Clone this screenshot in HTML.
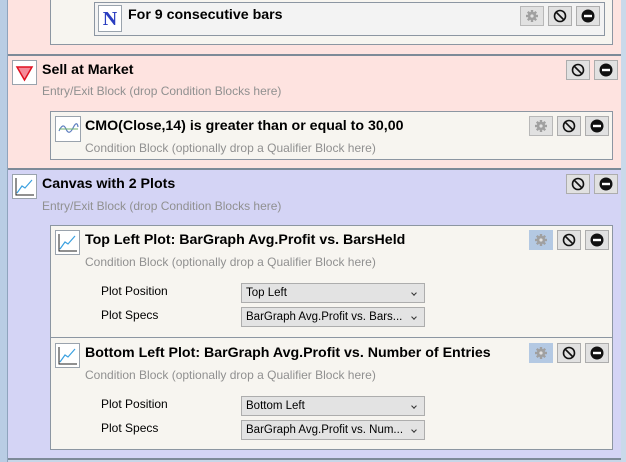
<!DOCTYPE html>
<html><head><style>
*{margin:0;padding:0;box-sizing:border-box}
body{width:626px;height:462px;overflow:hidden;background:#c7d6e8;font-family:"Liberation Sans",sans-serif;position:relative}
.a{position:absolute}
.sec{position:absolute;left:8px;width:613px;border-bottom:2px solid #7d8a98}
.t{position:absolute;font-weight:bold;font-size:14.2px;color:#000;white-space:nowrap}
.s{position:absolute;font-size:12px;color:#909090;white-space:nowrap}
.box{position:absolute;background:#f7f5f0;border:1px solid #8c96a2}
.ic{position:absolute;width:25px;height:25px;background:#fff;border:1px solid #9aa3ad}
.b{position:absolute;width:24px;height:20px;background:#e1e1e1;border:1px solid #adadad;display:flex;align-items:center;justify-content:center}
.b.g{border-color:#b8b8b8}
.b.h{background:#b4c9e3;border-color:#b4c9e3}
.l{position:absolute;font-size:12px;color:#000}
.dd{position:absolute;left:241px;width:184px;height:20px;background:#e3e3e3;border:1px solid #adadad;font-size:11.5px;padding:3px 0 0 4px;white-space:nowrap}
.dd:after{content:"";position:absolute;right:8px;top:7px;width:3px;height:3px;border-right:1px solid #333;border-bottom:1px solid #333;transform:rotate(45deg)}
</style></head><body>
<svg width="0" height="0" style="position:absolute"><defs>
<g id="gear"><circle cx="7" cy="7" r="4.2" fill="#a0a0a0"/><g stroke="#a0a0a0" stroke-width="2.4"><line x1="7" y1="1" x2="7" y2="13"/><line x1="1" y1="7" x2="13" y2="7"/><line x1="2.8" y1="2.8" x2="11.2" y2="11.2"/><line x1="11.2" y1="2.8" x2="2.8" y2="11.2"/></g><circle cx="7" cy="7" r="1.6" fill="#e1e1e1"/></g>
</defs></svg>
<div class="a" style="left:0;top:0;width:8px;height:462px;background:#b9cde4;border-right:1px solid #8fa4bd"></div>
<div class="a" style="left:621px;top:0;width:5px;height:462px;background:#c9d9ea"></div>

<div class="sec" style="top:0;height:56px;background:#fee3e0">
 <div class="box" style="left:42px;top:-1px;width:563px;height:46px"></div>
 <div class="a" style="left:86px;top:2px;width:511px;height:34px;background:#f3f3f3;border:1px solid #8c96a2"></div>
 <div class="ic" style="left:90px;top:5px;width:24px;height:27px;font:bold 20px 'Liberation Serif',serif;color:#2a3ec0;text-align:center;line-height:26px">N</div>
 <div class="t" style="left:120px;top:7px">For 9 consecutive bars</div>
</div>
<div class="b g" style="left:520px;top:6px"><svg width="14" height="14"><use href="#gear"/></svg></div>
<div class="b" style="left:548px;top:6px"><svg width="14" height="14"><circle cx="7" cy="7" r="5.5" fill="none" stroke="#111" stroke-width="1.6"/><line x1="3" y1="3" x2="11" y2="11" stroke="#111" stroke-width="1.6"/></svg></div>
<div class="b" style="left:576px;top:6px"><svg width="14" height="14"><circle cx="7" cy="7" r="6.5" fill="#111"/><rect x="3" y="5.8" width="8" height="2.4" fill="#fff"/></svg></div>

<div class="sec" style="top:56px;height:114px;background:#fee3e0">
 <div class="ic" style="left:4px;top:4px"><svg width="23" height="23"><polygon points="4,6 19,6 11.5,19" fill="#f58a98" stroke="#e01020" stroke-width="1.5"/></svg></div>
 <div class="t" style="left:34px;top:6px">Sell at Market</div>
 <div class="s" style="left:34px;top:28px">Entry/Exit Block (drop Condition Blocks here)</div>
 <div class="box" style="left:42px;top:55px;width:563px;height:49px">
  <div class="ic" style="left:4px;top:4px;width:26px;height:26px"><svg width="24" height="24"><path d="M3 14 Q7 5 10 12 T17 11 T22 10" fill="none" stroke="#6080c0" stroke-width="1.2"/><line x1="3" y1="12" x2="22" y2="12" stroke="#70b070" stroke-width="1"/></svg></div>
  <div class="t" style="left:34px;top:6px">CMO(Close,14) is greater than or equal to 30,00</div>
  <div class="s" style="left:34px;top:29px">Condition Block (optionally drop a Qualifier Block here)</div>
 </div>
</div>
<div class="b g" style="left:529px;top:116px"><svg width="14" height="14"><use href="#gear"/></svg></div>
<div class="b" style="left:557px;top:116px"><svg width="14" height="14"><circle cx="7" cy="7" r="5.5" fill="none" stroke="#111" stroke-width="1.6"/><line x1="3" y1="3" x2="11" y2="11" stroke="#111" stroke-width="1.6"/></svg></div>
<div class="b" style="left:585px;top:116px"><svg width="14" height="14"><circle cx="7" cy="7" r="6.5" fill="#111"/><rect x="3" y="5.8" width="8" height="2.4" fill="#fff"/></svg></div>
<div class="b" style="left:566px;top:60px"><svg width="14" height="14"><circle cx="7" cy="7" r="5.5" fill="none" stroke="#111" stroke-width="1.6"/><line x1="3" y1="3" x2="11" y2="11" stroke="#111" stroke-width="1.6"/></svg></div>
<div class="b" style="left:594px;top:60px"><svg width="14" height="14"><circle cx="7" cy="7" r="6.5" fill="#111"/><rect x="3" y="5.8" width="8" height="2.4" fill="#fff"/></svg></div>

<div class="sec" style="top:170px;height:290px;background:#d4d4f5">
 <div class="ic" style="left:4px;top:4px"><svg width="23" height="23"><path d="M3 3V20H21" fill="none" stroke="#222" stroke-width="1"/><path d="M4 18L9 11L12 13L19 5" fill="none" stroke="#3aa0e0" stroke-width="1.2"/></svg></div>
 <div class="t" style="left:34px;top:6px">Canvas with 2 Plots</div>
 <div class="s" style="left:34px;top:29px">Entry/Exit Block (drop Condition Blocks here)</div>
 <div class="box" style="left:42px;top:55px;width:563px;height:113px">
  <div class="ic" style="left:4px;top:4px"><svg width="23" height="23"><path d="M3 3V20H21" fill="none" stroke="#222" stroke-width="1"/><path d="M4 18L9 11L12 13L19 5" fill="none" stroke="#3aa0e0" stroke-width="1.2"/></svg></div>
  <div class="t" style="left:34px;top:6px">Top Left Plot: BarGraph Avg.Profit vs. BarsHeld</div>
  <div class="s" style="left:34px;top:29px">Condition Block (optionally drop a Qualifier Block here)</div>
  <div class="l" style="left:50px;top:58px">Plot Position</div>
  <div class="l" style="left:50px;top:82px">Plot Specs</div>
  <div class="dd" style="left:190px;top:57px">Top Left</div>
  <div class="dd" style="left:190px;top:81px">BarGraph Avg.Profit vs. Bars...</div>
 </div>
 <div class="box" style="left:42px;top:167px;width:563px;height:113px">
  <div class="ic" style="left:4px;top:5px"><svg width="23" height="23"><path d="M3 3V20H21" fill="none" stroke="#222" stroke-width="1"/><path d="M4 18L9 11L12 13L19 5" fill="none" stroke="#3aa0e0" stroke-width="1.2"/></svg></div>
  <div class="t" style="left:34px;top:7px">Bottom Left Plot: BarGraph Avg.Profit vs. Number of Entries</div>
  <div class="s" style="left:34px;top:30px">Condition Block (optionally drop a Qualifier Block here)</div>
  <div class="l" style="left:50px;top:59px">Plot Position</div>
  <div class="l" style="left:50px;top:83px">Plot Specs</div>
  <div class="dd" style="left:190px;top:58px">Bottom Left</div>
  <div class="dd" style="left:190px;top:82px">BarGraph Avg.Profit vs. Num...</div>
 </div>
</div>
<div class="b" style="left:566px;top:174px"><svg width="14" height="14"><circle cx="7" cy="7" r="5.5" fill="none" stroke="#111" stroke-width="1.6"/><line x1="3" y1="3" x2="11" y2="11" stroke="#111" stroke-width="1.6"/></svg></div>
<div class="b" style="left:594px;top:174px"><svg width="14" height="14"><circle cx="7" cy="7" r="6.5" fill="#111"/><rect x="3" y="5.8" width="8" height="2.4" fill="#fff"/></svg></div>
<div class="b h" style="left:529px;top:230px"><svg width="14" height="14"><use href="#gear"/></svg></div>
<div class="b" style="left:557px;top:230px"><svg width="14" height="14"><circle cx="7" cy="7" r="5.5" fill="none" stroke="#111" stroke-width="1.6"/><line x1="3" y1="3" x2="11" y2="11" stroke="#111" stroke-width="1.6"/></svg></div>
<div class="b" style="left:585px;top:230px"><svg width="14" height="14"><circle cx="7" cy="7" r="6.5" fill="#111"/><rect x="3" y="5.8" width="8" height="2.4" fill="#fff"/></svg></div>
<div class="b h" style="left:529px;top:343px"><svg width="14" height="14"><use href="#gear"/></svg></div>
<div class="b" style="left:557px;top:343px"><svg width="14" height="14"><circle cx="7" cy="7" r="5.5" fill="none" stroke="#111" stroke-width="1.6"/><line x1="3" y1="3" x2="11" y2="11" stroke="#111" stroke-width="1.6"/></svg></div>
<div class="b" style="left:585px;top:343px"><svg width="14" height="14"><circle cx="7" cy="7" r="6.5" fill="#111"/><rect x="3" y="5.8" width="8" height="2.4" fill="#fff"/></svg></div>
</body></html>
